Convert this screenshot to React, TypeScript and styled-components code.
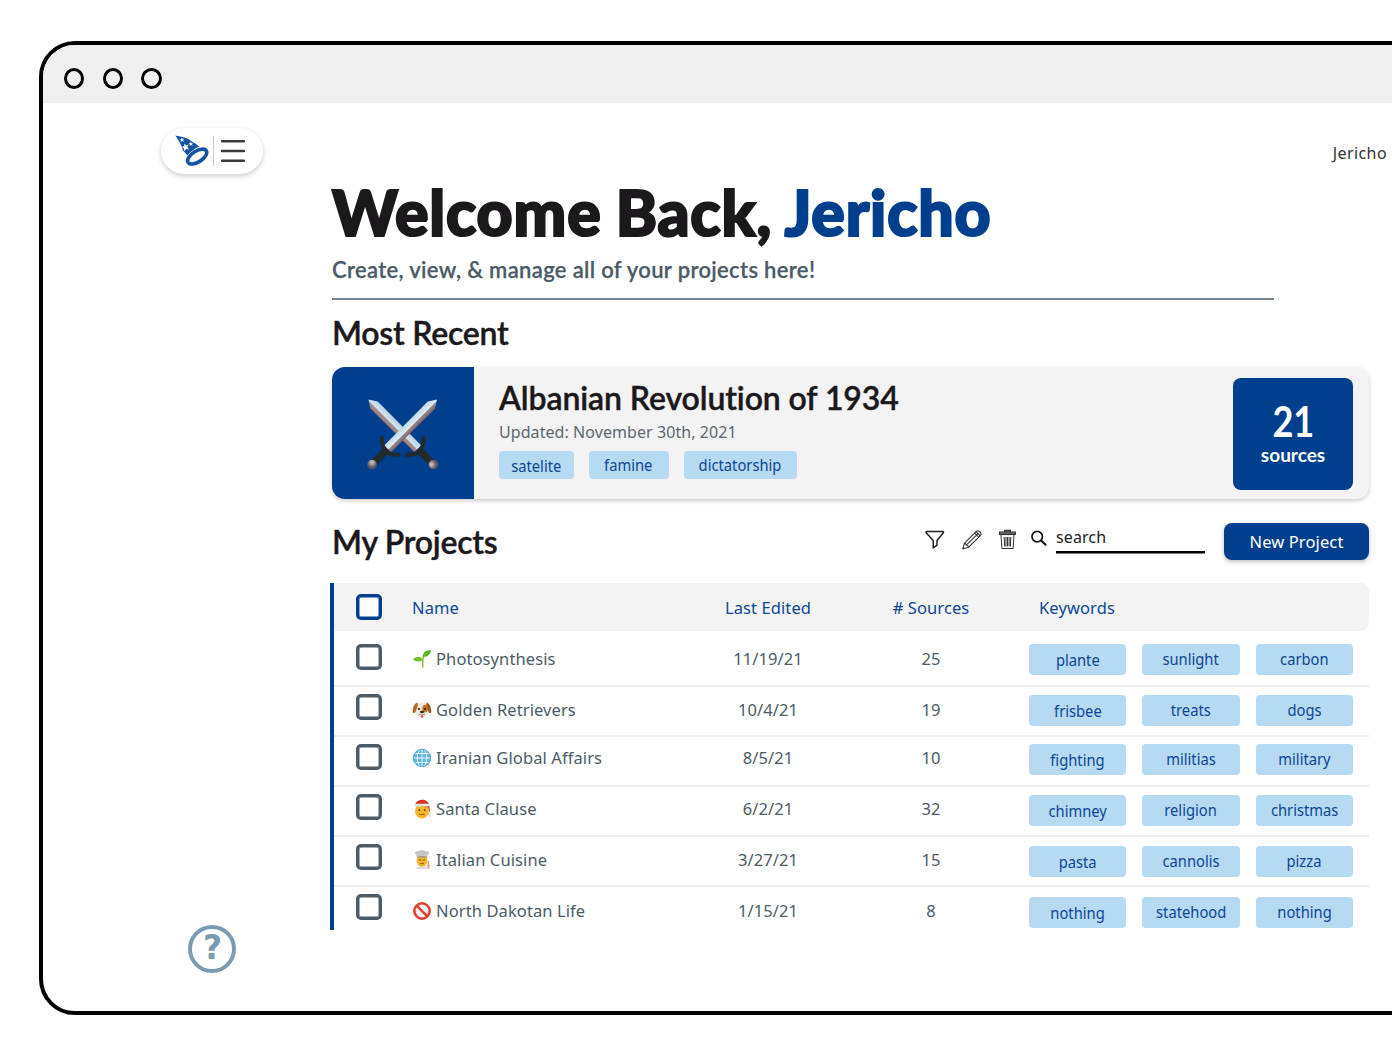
import React from "react";
import styled, { createGlobalStyle } from "styled-components";

const blue = "#003f8d";
const slate = "#4c5b66";

const Global = createGlobalStyle`
  * { box-sizing: border-box; }
  html, body { margin: 0; padding: 0; background: #fff; overflow: hidden; }
  body { font-family: "Noto Sans", "Liberation Sans", sans-serif; color: #1b191b; }
`;

const Page = styled.div`
  width: 1392px; height: 1053px; overflow: hidden; padding: 41px 0 0 39px;
`;
const Frame = styled.div`
  width: 1440px; height: 974px; border: 4px solid #000; border-radius: 36px;
  overflow: hidden; background: #fff; display: flex; flex-direction: column;
`;
const TitleBar = styled.div`
  height: 58px; flex: none; background: #efefef; display: flex; align-items: center;
  padding: 8px 0 0 21px; gap: 18.6px;
`;
const Dot = styled.span<{ $w: number }>`
  width: ${(p) => p.$w}px; height: 21px; border: 3px solid #000; border-radius: 50%;
`;
const Body = styled.div` display: flex; flex: 1; `;
const Sidebar = styled.aside`
  width: 289px; flex: none; display: flex; flex-direction: column;
  justify-content: space-between; padding: 25px 0 38px 118px;
`;
const MenuPill = styled.div`
  width: 102px; height: 46px; border-radius: 23px; background: #fff;
  box-shadow: 0 2px 5px rgba(0, 0, 0, 0.2); display: flex; align-items: center; padding-left: 14px;
`;
const PillRule = styled.span` width: 1px; height: 30px; background: #c9c9c9; margin: 0 7px 0 4px; `;
const Help = styled.div`
  width: 48px; height: 48px; margin-left: 27px; border: 4px solid #7c9bb1; border-radius: 50%;
  display: flex; align-items: center; justify-content: center; color: #7c9bb1;
  font: 700 33px/38px "DejaVu Sans", sans-serif; padding: 0 0 3px 1px;
`;
const Main = styled.main` width: 1060px; flex: none; display: flex; flex-direction: column; `;
const UserName = styled.div`
  align-self: flex-end; margin: 38px 5px 0 0; font-size: 16px; line-height: 24px; height: 24px; color: #333;
  letter-spacing: 0.4px;
`;
const Title = styled.h1`
  margin: 9px 0 0; height: 79px; font: 900 62.5px/76px Lato, sans-serif; white-space: nowrap;
  letter-spacing: 0.85px; word-spacing: -1.5px; -webkit-text-stroke: 2.2px currentColor;
  span { color: ${blue}; }
`;
const Subtitle = styled.p`
  margin: 3px 0 0; height: 28px; font: 600 22px/28px Lato, sans-serif; color: ${slate}; white-space: nowrap;
  letter-spacing: 0.33px; -webkit-text-stroke: 0.25px currentColor;
`;
const Rule = styled.div` width: 942px; height: 2px; margin-top: 14px; background: #75838e; `;
const SectionTitle = styled.h2<{ $top: number }>`
  margin: ${(p) => p.$top}px 0 0; font: 600 32px/40px Lato, sans-serif; white-space: nowrap;
  letter-spacing: -0.25px; -webkit-text-stroke: 0.4px currentColor;
`;
const RecentHead = styled.div` height: 67px; display: flex; align-items: flex-start; `;
const Card = styled.section`
  width: 1037px; height: 132px; border-radius: 13px; background: #f3f3f3; display: flex;
  overflow: hidden; box-shadow: 0 2px 4px rgba(0, 0, 0, 0.2);
`;
const CardArt = styled.div`
  width: 142px; background: ${blue}; display: flex; align-items: center; justify-content: center; padding-top: 2px;
`;
const CardInfo = styled.div` flex: 1; padding: 11px 0 0 25px; `;
const CardTitle = styled.h3`
  margin: 0; font: 600 32px/40px Lato, sans-serif; white-space: nowrap; font-variant-ligatures: none;
  letter-spacing: -0.1px; -webkit-text-stroke: 0.4px currentColor;
`;
const Updated = styled.div` font-size: 16px; line-height: 24px; margin-top: 2px; color: #5c6870; letter-spacing: 0.07px; `;
const CardTags = styled.div` display: flex; margin-top: 7px; gap: 15px; `;
const Tag = styled.span<{ $w: number; $h: number; $shift?: number }>`
  width: ${(p) => p.$w}px; height: ${(p) => p.$h}px; border-radius: 4px; background: #b6daf2;
  color: #0d4795; display: flex; align-items: center; justify-content: center;
  font-size: 16px; white-space: nowrap;
  span { transform: translateY(${(p) => p.$shift ?? 0}px) scaleX(0.92); }
`;
const SourceBox = styled.div`
  width: 120px; height: 112px; margin: 11px 16px 0 0; border-radius: 8px; background: ${blue}; color: #fff;
  display: flex; flex-direction: column; align-items: center; padding-top: 18px;
`;
const SourceCount = styled.div` font: 700 42px/50px Lato, sans-serif; transform: scaleX(0.86); `;
const SourceLabel = styled.div` font: 700 19px/23px Lato, sans-serif; margin-top: -3px; `;
const ProjectsHead = styled.div` width: 1037px; height: 84px; display: flex; align-items: flex-start; `;
const Tools = styled.div` margin-left: auto; display: flex; align-items: flex-start; padding-top: 30px; `;
const Icon = styled.svg<{ $gap: number }>` display: block; margin-right: ${(p) => p.$gap}px; overflow: visible; `;
const Search = styled.div`
  width: 149px; height: 26px; border-bottom: 2px solid #000; margin: -2px 19px 0 0;
  box-shadow: 0 0.5px 0 #000;
  font-size: 16px; line-height: 21px; color: #222; letter-spacing: 0.1px;
`;
const NewButton = styled.button`
  width: 145px; height: 37px; margin-top: -6px; border: 0; border-radius: 8px; background: ${blue};
  color: #fff; font: 400 16.5px/36px "Noto Sans", sans-serif; padding: 0; letter-spacing: 0.12px;
  box-shadow: 0 2px 4px rgba(0, 0, 0, 0.25);
`;
const Table = styled.div`
  width: 1039px; margin-left: -2px; border-left: 4px solid ${blue}; height: 347px;
`;
const Row = styled.div<{ $first?: boolean; $last?: boolean }>`
  display: grid; grid-template-columns: 56px 256px 200px 126px 1fr; align-items: start;
  height: ${(p) => (p.$first ? 56 : p.$last ? 43 : 50)}px;
  padding: ${(p) => (p.$first ? 6 : 0)}px 0 0 22px;
  border-bottom: ${(p) => (p.$last ? "0" : "2px solid #eeeeee")};
`;
const HeadRow = styled(Row)`
  height: 48px; background: #f3f3f3; border: 0; border-radius: 0 8px 8px 0; color: #0d4795; padding-top: 0;
`;
const Check = styled.span<{ $top: number; $head?: boolean }>`
  width: 26px; height: 26px; margin-top: ${(p) => p.$top}px; border-radius: 5px;
  border: 3px solid ${(p) => (p.$head ? blue : slate)}; background: #fff;
  box-shadow: inset 0 0 0 0.5px ${(p) => (p.$head ? blue : slate)};
`;
const Cell = styled.div<{ $nudge: number; $center?: boolean; $indent?: number }>`
  display: flex; align-items: center; justify-content: ${(p) => (p.$center ? "center" : "flex-start")};
  margin-top: ${(p) => 10 + p.$nudge}px; margin-left: ${(p) => p.$indent ?? 0}px;
  font-size: 16.5px; line-height: 24px; height: 24px; white-space: nowrap; letter-spacing: 0.1px;
`;
const BodyCell = styled(Cell)` color: ${slate}; `;
const Emoji = styled.svg` width: 20px; height: 20px; margin-right: 4px; flex: none; `;
const Keywords = styled.div<{ $nudge: number }>`
  display: flex; gap: 16px; padding-left: 35px; margin-top: ${(p) => 7 + p.$nudge}px;
`;

const Hat = () => (
  <svg width="34" height="32" viewBox="0 0 34 32">
    <path d="M.3.6C7 1.600 13 3.200 17 6.400Q21.500 8.800 24 11.500C19 14 14.500 17 12.600 20.500L8 15.500C6.500 10.500 3.500 5 .3.6Z" fill="#1453a2" />
    <g fill="#fff">
      <path d="M6.600 2.400l1 1.500 1.700-.1-1.200 1.300.7 1.700-1.700-.8-1.400.9.3-1.800-1.400-1.100 1.700-.1z" />
      <path d="M9.400 8.200l1.600 2.200 2.800-.9-1.500 2.500 1.800 2.500-3-.6-1.800 2.400-.3-3-2.500-1.300 2.800-1z" />
      <path d="M15.600 6.400l.8 1.500 1.800-.1-1.200 1.300.6 1.600-1.600-.8-1.400 1 .3-1.700-1.300-1 1.700-.2z" />
    </g>
    <ellipse cx="22.200" cy="21.600" rx="10.900" ry="5.400" transform="rotate(-33 22.200 21.600)" fill="#fff" stroke="#1453a2" strokeWidth="3.600" />
  </svg>
);

const Swords = () => (
  <svg width="72" height="72" viewBox="0 0 72 72">
    <defs>
      <linearGradient id="bl" x1="0" x2="1"><stop offset="0" stopColor="#8b7377" /><stop offset=".4" stopColor="#a99699" /><stop offset=".46" stopColor="#d3e6f2" /><stop offset="1" stopColor="#b7cfdf" /></linearGradient>
      <linearGradient id="br" x1="0" x2="1"><stop offset="0" stopColor="#bdd6e6" /><stop offset=".55" stopColor="#dcecf5" /><stop offset=".62" stopColor="#9a8588" /><stop offset="1" stopColor="#776367" /></linearGradient>
      <radialGradient id="pm" cx=".35" cy=".35"><stop offset="0" stopColor="#dccbd0" /><stop offset="1" stopColor="#5e565c" /></radialGradient>
    </defs>
    <g transform="translate(66.500 66.500) rotate(-45)">
      <path d="M-4.800-22L-5.200-84 0-92 5.200-84 4.800-22Z" fill="url(#bl)" />
      <rect x="-3.600" y="-22" width="7.200" height="20" rx="2" fill="#24292b" />
      <path d="M-12.800-27Q-7-19.500 0-19.500Q7-19.500 12.800-27" fill="none" stroke="#24292b" strokeWidth="4" />
      <circle r="4.800" fill="url(#pm)" />
    </g>
    <g transform="translate(5 66.500) rotate(45)">
      <path d="M-4.800-22L-5.200-84 0-92 5.200-84 4.800-22Z" fill="url(#br)" />
      <rect x="-3.600" y="-22" width="7.200" height="20" rx="2" fill="#24292b" />
      <path d="M-12.800-27Q-7-19.500 0-19.500Q7-19.500 12.800-27" fill="none" stroke="#24292b" strokeWidth="4" />
      <circle r="4.800" fill="url(#pm)" />
    </g>
  </svg>
);

const art: Record<string, React.ReactNode> = {
  plant: (
    <>
      <path d="M10.600 18.800C10.800 14 10.800 10 11.600 6.500" fill="none" stroke="#7cc42c" strokeWidth="1.400" />
      <path d="M10.800 7.800C10.500 3.500 14 .8 19.300 1.200 18.500 5.500 15 8.300 10.800 7.800Z" fill="#5fb321" />
      <path d="M10.900 11C9 13 3 13.300 1 10.300 4 6.800 9 6.500 10.900 11Z" fill="#72c02c" />
    </>
  ),
  dog: (
    <>
      <ellipse cx="10" cy="9.800" rx="7.200" ry="7.200" fill="#f0e6dc" />
      <path d="M5.500 2.600C2.800 3 .4 7.500.7 12.200c1 1.800 2.600.6 3.100-1.200L5.800 6Z" fill="#b5691c" />
      <path d="M14.500 2.600c2.700.4 5.100 4.900 4.800 9.600-1 1.800-2.600.6-3.100-1.200L14.200 6Z" fill="#9c5618" />
      <ellipse cx="13" cy="8.800" rx="2.800" ry="3.800" fill="#c4741f" />
      <circle cx="7" cy="9" r="1.100" fill="#222" /><circle cx="13" cy="9" r="1.100" fill="#222" />
      <ellipse cx="10" cy="12" rx="1.900" ry="1.200" fill="#222" />
      <path d="M7 14.300q3 1 6 0" fill="none" stroke="#8b6b5b" strokeWidth=".7" />
      <ellipse cx="10" cy="16.500" rx="1.400" ry="1.700" fill="#ef6a85" />
    </>
  ),
  globe: (
    <>
      <circle cx="10" cy="10" r="9" fill="#5fb6dc" />
      <g fill="none" stroke="#e9f7fd" strokeWidth="1">
        <path d="M10 1v18M1 10h18M2.600 5.500h14.800M2.600 14.500h14.800" />
        <ellipse cx="10" cy="10" rx="4.800" ry="9" />
      </g>
      <circle cx="10" cy="10" r="8.600" fill="none" stroke="#4ea6cf" strokeWidth=".9" />
    </>
  ),
  santa: (
    <>
      <ellipse cx="10" cy="12" rx="7" ry="7.600" fill="#f6b62a" />
      <path d="M2.800 6.500C4-.6 15.500-1.600 17.300 6L18.300 15 16 8Z" fill="#d5342b" />
      <rect x="2.300" y="4.800" width="15.200" height="2.800" rx="1.400" fill="#e9e3de" />
      <circle cx="17.700" cy="17" r="1.100" fill="#ddd" />
      <circle cx="7.300" cy="11" r=".9" fill="#5a3510" /><circle cx="12.700" cy="11" r=".9" fill="#5a3510" />
      <path d="M7.300 15.500h5.400" fill="none" stroke="#9d5a10" strokeWidth="1" />
    </>
  ),
  chef: (
    <>
      <path d="M3.500 19Q10 13 16.500 19Z" fill="#dcdcdc" />
      <ellipse cx="10" cy="10.800" rx="5.500" ry="6" fill="#f4b52b" />
      <path d="M4.800 7.200L4.200 4.300C1.500 3.500 3.500.6 6 1.500 7.500-.2 12.500-.2 14 1.500c2.500-.9 4.500 2 1.800 2.800l-.6 2.900Q10 5.600 4.800 7.200Z" fill="#c4c4c2" />
      <path d="M5 7.400q5-1.600 10 0" fill="none" stroke="#7b7a78" strokeWidth=".8" />
      <circle cx="8" cy="10" r=".8" fill="#4b2d10" /><circle cx="12" cy="10" r=".8" fill="#4b2d10" />
      <path d="M8 13.600h4" stroke="#8a5313" strokeWidth=".9" />
      <path d="M16.500 18.500V11" stroke="#c99b6b" strokeWidth="1.400" /><circle cx="16.400" cy="16" r="1.700" fill="#eeb08a" />
    </>
  ),
  ban: (
    <>
      <circle cx="10" cy="10" r="7.700" fill="#f7f1f0" stroke="#e0402f" strokeWidth="2.500" />
      <path d="M4.600 4.600l10.800 10.800" stroke="#e0402f" strokeWidth="2.500" />
    </>
  ),
};

const projects = [
  { icon: "plant", name: "Photosynthesis", date: "11/19/21", n: 25, tags: ["plante", "sunlight", "carbon"], textNudge: 0, tagNudge: 0 },
  { icon: "dog", name: "Golden Retrievers", date: "10/4/21", n: 19, tags: ["frisbee", "treats", "dogs"], textNudge: 1, tagNudge: 1 },
  { icon: "globe", name: "Iranian Global Affairs", date: "8/5/21", n: 10, tags: ["fighting", "militias", "military"], textNudge: -1, tagNudge: 0 },
  { icon: "santa", name: "Santa Clause", date: "6/2/21", n: 32, tags: ["chimney", "religion", "christmas"], textNudge: 0, tagNudge: 1 },
  { icon: "chef", name: "Italian Cuisine", date: "3/27/21", n: 15, tags: ["pasta", "cannolis", "pizza"], textNudge: 1, tagNudge: 2 },
  { icon: "ban", name: "North Dakotan Life", date: "1/15/21", n: 8, tags: ["nothing", "statehood", "nothing"], textNudge: 2, tagNudge: 3 },
];

export default function App() {
  return (
    <>
      <Global />
      <Page>
        <Frame>
          <TitleBar><Dot $w={20} /><Dot $w={20} /><Dot $w={21} /></TitleBar>
          <Body>
            <Sidebar>
              <MenuPill>
                <Hat />
                <PillRule />
                <svg width="24" height="24" viewBox="0 0 24 24"><path d="M1 2.200h22M1 12h22M1 21.800h22" stroke="#3b3b3d" strokeWidth="2.400" strokeLinecap="round" /></svg>
              </MenuPill>
              <Help>?</Help>
            </Sidebar>
            <Main>
              <UserName>Jericho</UserName>
              <Title>Welcome Back, <span>Jericho</span></Title>
              <Subtitle>Create, view, &amp; manage all of your projects here!</Subtitle>
              <Rule />
              <RecentHead><SectionTitle $top={13}>Most Recent</SectionTitle></RecentHead>
              <Card>
                <CardArt><Swords /></CardArt>
                <CardInfo>
                  <CardTitle>Albanian Revolution of 1934</CardTitle>
                  <Updated>Updated: November 30th, 2021</Updated>
                  <CardTags>
                    <Tag $w={74.5} $h={28} $shift={1}><span>satelite</span></Tag>
                    <Tag $w={80} $h={28}><span>famine</span></Tag>
                    <Tag $w={113} $h={28}><span>dictatorship</span></Tag>
                  </CardTags>
                </CardInfo>
                <SourceBox><SourceCount>21</SourceCount><SourceLabel>sources</SourceLabel></SourceBox>
              </Card>
              <ProjectsHead>
                <SectionTitle $top={23}>My Projects</SectionTitle>
                <Tools>
                  <Icon $gap={17} width="20" height="22" viewBox="0 0 20 22"><path d="M1.400 2.400h16.800c.4.300.4 1.200 0 1.700L12 11.500v4.700L8.200 19V11.500L1.400 4.100c-.4-.5-.4-1.400 0-1.700Z" fill="none" stroke="#222" strokeWidth="1.500" strokeLinejoin="round" /></Icon>
                  <Icon $gap={17} width="20" height="22" viewBox="0 0 20 22"><g fill="none" stroke="#333" strokeWidth="1.100" strokeLinejoin="round"><path d="M.8 20L2.400 14.300 14.600 2.200q1.500-1.100 3 .3l1 1q1.200 1.500 0 2.900L6.700 18.200Z" /><path d="M2.400 14.300q1.600.1 1.900 1.900 2 .2 2.400 2M4.300 16.200L16 4.600M12.700 4.200l4.200 4.200M14.200 2.800l4 4" /></g></Icon>
                  <Icon $gap={15} width="17" height="22" viewBox="0 0 17 22"><path d="M5.500 3V1.400h6V3M.6 3h15.800v2.400H.6Z" fill="#777" stroke="#333" strokeWidth="1.100" /><path d="M2 5.800l.9 13.700h11.200L15 5.800M5.200 8l.4 9.500M8.500 8v9.500M11.800 8l-.4 9.500M6.900 8v9.500M10.100 8v9.500" fill="none" stroke="#333" strokeWidth="1" /></Icon>
                  <Icon $gap={9} width="16" height="20" viewBox="0 0 16 20"><circle cx="6.200" cy="7.600" r="5.200" fill="none" stroke="#111" strokeWidth="1.700" /><path d="M10.200 11.600l4.400 4.200" stroke="#111" strokeWidth="2.100" strokeLinecap="round" /></Icon>
                  <Search>search</Search>
                  <NewButton>New Project</NewButton>
                </Tools>
              </ProjectsHead>
              <Table>
                <HeadRow>
                  <Check $top={11} $head />
                  <Cell $nudge={3}>Name</Cell>
                  <Cell $nudge={3} $center>Last Edited</Cell>
                  <Cell $nudge={3} $center>{"# Sources"}</Cell>
                  <Cell $nudge={3} $indent={45}>Keywords</Cell>
                </HeadRow>
                {projects.map((p, i) => (
                  <Row key={p.name} $first={i === 0} $last={i === projects.length - 1}>
                    <Check $top={7} />
                    <BodyCell $nudge={p.textNudge}><Emoji viewBox="0 0 20 20">{art[p.icon]}</Emoji>{p.name}</BodyCell>
                    <BodyCell $nudge={p.textNudge} $center>{p.date}</BodyCell>
                    <BodyCell $nudge={p.textNudge} $center>{p.n}</BodyCell>
                    <Keywords $nudge={p.tagNudge}>
                      {p.tags.map((t, k) => <Tag key={k} $w={97.3} $h={31} $shift={k === 0 ? 0 : -1}><span>{t}</span></Tag>)}
                    </Keywords>
                  </Row>
                ))}
              </Table>
            </Main>
          </Body>
        </Frame>
      </Page>
    </>
  );
}
